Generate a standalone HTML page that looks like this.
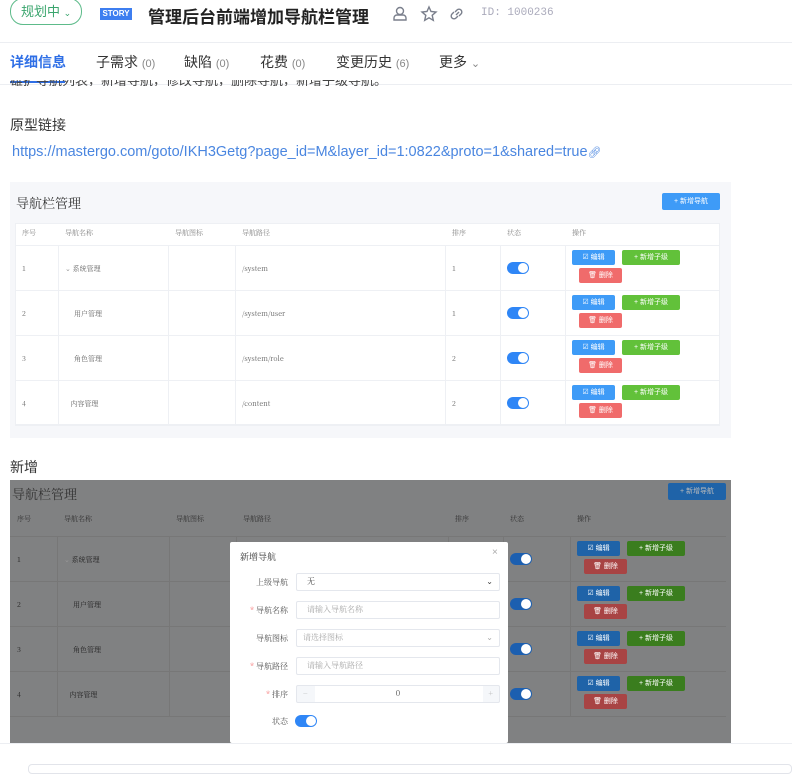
<!DOCTYPE html>
<html><head><meta charset="utf-8"><style>
*{box-sizing:border-box;margin:0;padding:0}
body{width:792px;height:768px;overflow:hidden;background:#fff;font-family:"Liberation Sans","Noto Sans CJK SC",sans-serif;position:relative;color:#333}
.a{position:absolute;white-space:nowrap}
.tab{font-size:14px;color:#333;top:52px}
.tab span{font-size:11px;color:#888}
.cell{position:absolute;font-size:7px;color:#666;font-family:"Noto Serif CJK SC","Liberation Serif",serif}
.btn{position:absolute;font-size:7px;color:#fff;border-radius:2px;text-align:center;line-height:15px;height:15px}
.sw{position:absolute;width:22px;height:12px;border-radius:6px;background:#2f86f6}
.sw:after{content:"";position:absolute;right:1px;top:1px;width:10px;height:10px;border-radius:50%;background:#fff}
.inp{position:absolute;left:296px;width:204px;height:18px;border:1px solid #e4e7ed;border-radius:2px;font-size:8px;color:#aaa;line-height:16px;padding-left:10px;font-family:"Noto Serif CJK SC",serif}
.lab{position:absolute;right:504px;font-size:8px;color:#555;font-family:"Noto Serif CJK SC",serif}
.lab b{color:#f56c6c;font-weight:normal;margin-right:2px}
</style></head><body>
<div class="a" style="left:10px;top:-2px;width:72px;height:27px;border:1px solid #5dbb8a;border-radius:13px;color:#3aa56d;font-size:13px;line-height:25px;padding-left:10px">规划中 <span style="font-size:9px">⌄</span></div>
<div class="a" style="left:100px;top:8px;width:32px;height:12px;background:#3d7ef0;color:#fff;font-size:8px;font-weight:bold;text-align:center;line-height:12px">STORY</div>
<div class="a" style="left:148px;top:3px;font-size:17px;font-weight:bold;color:#222">管理后台前端增加导航栏管理</div>
<svg class="a" style="left:392px;top:5px" width="80" height="18" viewBox="0 0 80 18" fill="none" stroke="#7a7f8c" stroke-width="1.4">
<circle cx="8" cy="6" r="3.5"/><path d="M2 15h12v-2a3 3 0 0 0-3-3H5a3 3 0 0 0-3 3z"/>
<path d="M37 2l2 4.5 5 .5-3.8 3.3 1.1 5L37 12.8 32.7 15.3l1.1-5L30 7l5-.5z"/>
<path d="M63 7l2-2a2.8 2.8 0 0 1 4 4l-2 2M66 11l-2 2a2.8 2.8 0 0 1-4-4l2-2M64 10l3-3"/>
</svg>
<div class="a" style="left:481px;top:7px;font-size:11px;color:#aab;font-family:'Liberation Mono',monospace">ID: 1000236</div>
<div class="a" style="left:0;top:42px;width:792px;height:1px;background:#eceef2"></div>
<div class="a tab" style="left:10px;color:#2f6fe6;font-weight:bold">详细信息</div>
<div class="a" style="left:10px;top:81px;width:55px;height:2px;background:#2f6fe6"></div>
<div class="a tab" style="left:96px">子需求 <span>(0)</span></div>
<div class="a tab" style="left:184px">缺陷 <span>(0)</span></div>
<div class="a tab" style="left:260px">花费 <span>(0)</span></div>
<div class="a tab" style="left:336px">变更历史 <span>(6)</span></div>
<div class="a tab" style="left:439px">更多 <span style="font-size:11px">⌄</span></div>
<div class="a" style="left:0;top:84px;width:792px;height:1px;background:#eceef2"></div>
<div class="a" style="left:10px;top:80px;font-size:13px;color:#444;height:6px;overflow:hidden;line-height:0px;padding-top:1px">雄扩导航列表，新增导航，修改导航，删除导航，新增子级导航。</div>
<div class="a" style="left:10px;top:115px;font-size:14px;color:#333">原型链接</div>
<div class="a" style="left:12px;top:144px;font-size:14.5px;color:#4a86e0">https://mastergo.com/goto/IKH3Getg?page_id=M&amp;layer_id=1:0822&amp;proto=1&amp;shared=true<span style="font-size:11px">🔗︎</span></div>

<div class="a" style="left:10px;top:182px;width:721px;height:256px;background:#f6f7fa"></div>
<div class="a" style="left:16px;top:193px;font-size:13px;color:#333;font-family:'Noto Serif CJK SC',serif">导航栏管理</div>
<div class="btn" style="left:662px;top:193px;width:58px;height:17px;line-height:17px;background:#3e9bf7">+ 新增导航</div>
<div class="a" style="left:15px;top:223px;width:705px;height:202px;background:#fff;border:1px solid #eef0f4"></div>
<div id="t1"></div>

<div class="a" style="left:10px;top:457px;font-size:14px;color:#333">新增</div>
<div class="a" style="left:10px;top:480px;width:721px;height:263px;background:#808182"></div>
<div class="a" style="left:12px;top:484px;font-size:13px;color:#333;font-family:'Noto Serif CJK SC',serif">导航栏管理</div>
<div class="btn" style="left:668px;top:483px;width:58px;height:17px;line-height:17px;background:#1f63a8;color:#bbb">+ 新增导航</div>
<div id="t2"></div>
<div class="a" style="left:230px;top:542px;width:278px;height:201px;background:#fff;border-radius:2px"></div>
<div class="a" style="left:240px;top:550px;font-size:9px;color:#333;font-family:'Noto Serif CJK SC',serif">新增导航</div>
<div class="a" style="left:492px;top:547px;font-size:10px;color:#aaa">×</div>
<div class="lab" style="top:577px">上级导航</div><div class="inp" style="top:573px;color:#444">无<span style="position:absolute;right:6px">⌄</span></div>
<div class="lab" style="top:605px"><b>*</b>导航名称</div><div class="inp" style="top:601px">请输入导航名称</div>
<div class="lab" style="top:633px">导航图标</div><div class="inp" style="top:629px;padding-left:6px">请选择图标<span style="position:absolute;right:6px">⌄</span></div>
<div class="lab" style="top:661px"><b>*</b>导航路径</div><div class="inp" style="top:657px">请输入导航路径</div>
<div class="lab" style="top:689px"><b>*</b>排序</div><div class="inp" style="top:685px;padding:0;text-align:center;color:#555;background:linear-gradient(90deg,#f5f7fa 18px,#fff 18px,#fff 186px,#f5f7fa 186px)"><span style="position:absolute;left:6px;color:#bbb">−</span>0<span style="position:absolute;right:6px;color:#bbb">+</span></div>
<div class="lab" style="top:716px">状态</div><div class="sw" style="left:295px;top:715px"></div>
<div class="a" style="left:0;top:743px;width:792px;height:1px;background:#eceef2"></div>
<div class="a" style="left:28px;top:764px;width:764px;height:10px;border:1px solid #e2e4ea;border-radius:4px"></div>

<script>
function build(id,cols,top,rowsTop,dim){
 var h='';var hc=dim?'#333':'#888';
 var heads=['序号','导航名称','导航图标','导航路径','排序','状态','操作'];
 for(var i=0;i<7;i++){h+='<div class="cell" style="left:'+(cols[i]+7)+'px;top:'+(top+5)+'px;color:'+hc+'">'+heads[i]+'</div>';}
 var lc=dim?'#777':'#eef0f4';
 for(var r=0;r<=4;r++){h+='<div class="a" style="left:'+cols[0]+'px;top:'+(rowsTop+r*45)+'px;width:'+(cols[7]-cols[0])+'px;height:1px;background:'+lc+'"></div>';}
 for(var i=1;i<7;i++){h+='<div class="a" style="left:'+cols[i]+'px;top:'+(rowsTop)+'px;width:1px;height:180px;background:'+lc+'"></div>';}
 var names=['<span style="color:#999">⌄</span> 系统管理','&nbsp;&nbsp;&nbsp;&nbsp;&nbsp;用户管理','&nbsp;&nbsp;&nbsp;&nbsp;&nbsp;角色管理','&nbsp;&nbsp;&nbsp;内容管理'];
 var paths=['/system','/system/user','/system/role','/content'];var ord=['1','1','2','2'];
 var tc=dim?'#222':'#666';
 for(var r=0;r<4;r++){var y=rowsTop+r*45;var c=y+19;
  h+='<div class="cell" style="left:'+(cols[0]+7)+'px;top:'+c+'px;color:'+tc+'">'+(r+1)+'</div>';
  h+='<div class="cell" style="left:'+(cols[1]+7)+'px;top:'+c+'px;color:'+tc+'">'+names[r]+'</div>';
  h+='<div class="cell" style="left:'+(cols[3]+7)+'px;top:'+c+'px;color:'+tc+'">'+paths[r]+'</div>';
  h+='<div class="cell" style="left:'+(cols[4]+7)+'px;top:'+c+'px;color:'+tc+'">'+ord[r]+'</div>';
  h+='<div class="sw" style="left:'+(cols[5]+7)+'px;top:'+(y+17)+'px;'+(dim?'background:#1c5fb0':'')+'"></div>';
  h+='<div class="btn" style="left:'+(cols[6]+7)+'px;top:'+(y+5)+'px;width:43px;background:'+(dim?'#1f63a8':'#3e9bf7')+'">☑ 编辑</div>';
  h+='<div class="btn" style="left:'+(cols[6]+57)+'px;top:'+(y+5)+'px;width:58px;background:'+(dim?'#3a7d1e':'#62c13a')+'">+ 新增子级</div>';
  h+='<div class="btn" style="left:'+(cols[6]+14)+'px;top:'+(y+23)+'px;width:43px;background:'+(dim?'#a84444':'#f06b6b')+'">🗑︎ 删除</div>';
 }
 document.getElementById(id).outerHTML=h;
}
build('t1',[15,58,168,235,445,500,565,720],223,245,false);
build('t2',[10,57,169,236,448,503,570,726],509,536,true);
</script>
</body></html>
